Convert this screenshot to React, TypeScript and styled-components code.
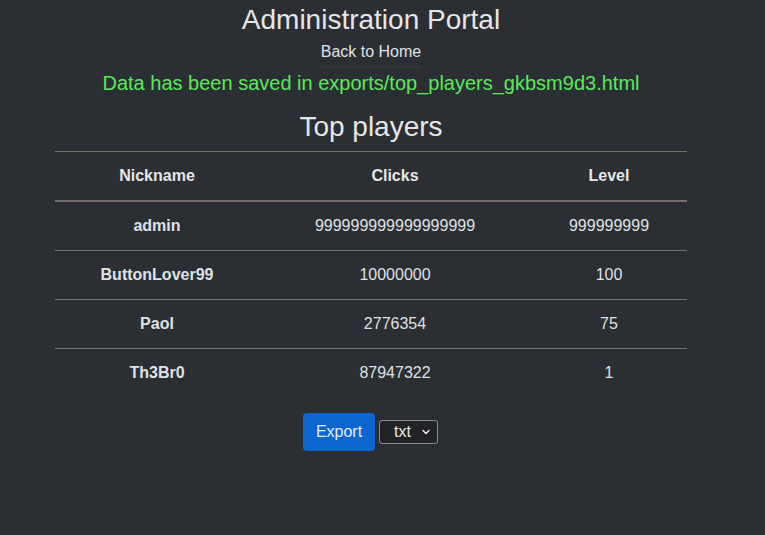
import React from "react";
import styled, { createGlobalStyle } from "styled-components";

const Global = createGlobalStyle`
  html, body { margin: 0; padding: 0; background: #2b2e32; }
  body { font-family: "Liberation Sans", Arial, sans-serif; color: #dee2e6; }
`;

const Page = styled.div`
  width: 742px;
  min-height: 535px;
  display: flex;
  flex-direction: column;
  align-items: center;
  padding-top: 4px;
  box-sizing: border-box;
`;

const Title = styled.h1`
  margin: 0;
  font-size: 28px;
  font-weight: 400;
  line-height: 32px;
  color: #e4e6e8;
`;

const HomeLink = styled.a`
  margin-top: 6px;
  font-size: 16px;
  line-height: 20px;
  color: #dee2e6;
  text-decoration: none;
  padding-bottom: 4px;
  border-bottom: 2px solid #33363a;
`;

const Notice = styled.p`
  margin: 3px 0 0;
  font-size: 20px;
  line-height: 24px;
  color: #5ae85a;
`;

const SubTitle = styled.h2`
  margin: 15px 0 0;
  font-size: 28px;
  font-weight: 400;
  line-height: 34px;
  color: #e4e6e8;
`;

const Table = styled.table`
  margin-top: 7px;
  width: 632px;
  border-collapse: collapse;
  font-size: 16px;
  border-top: 1px solid #77706a;
`;

const Th = styled.th`
  height: 48px;
  padding: 0 8px;
  font-weight: 700;
  text-align: center;
  border-bottom: 2px solid #77706a;
  color: #e4e6e8;
`;

const Row = styled.tr`
  &:last-child td { border-bottom: none; }
`;

const Td = styled.td<{ $bold?: boolean }>`
  height: 48px;
  padding: 0 8px;
  text-align: center;
  font-weight: ${(p) => (p.$bold ? 700 : 400)};
  border-bottom: 1px solid #77706a;
  color: #dee2e6;
`;

const Actions = styled.div`
  margin-top: 16px;
  margin-right: 1px;
  display: flex;
  align-items: center;
  gap: 4px;
`;

const ExportButton = styled.button`
  width: 72px;
  height: 38px;
  border: none;
  border-radius: 4px;
  background: #0b66d0;
  color: #e8eef8;
  font-family: "Liberation Sans", Arial, sans-serif;
  font-size: 16px;
  padding: 0;
`;

const SelectBox = styled.div`
  width: 59px;
  height: 24px;
  box-sizing: border-box;
  border: 1px solid #8a8d92;
  border-radius: 3px;
  background: #212327;
  display: flex;
  align-items: center;
  justify-content: space-between;
  padding: 0 6px 0 14px;
  font-size: 16px;
  color: #e8e8e8;
`;

const players = [
  { name: "admin", clicks: "999999999999999999", level: "999999999" },
  { name: "ButtonLover99", clicks: "10000000", level: "100" },
  { name: "Paol", clicks: "2776354", level: "75" },
  { name: "Th3Br0", clicks: "87947322", level: "1" },
];

export default function App() {
  return (
    <>
      <Global />
      <Page>
        <Title>Administration Portal</Title>
        <HomeLink href="#">Back to Home</HomeLink>
        <Notice>Data has been saved in exports/top_players_gkbsm9d3.html</Notice>
        <SubTitle>Top players</SubTitle>
        <Table>
          <colgroup>
            <col style={{ width: "204px" }} />
            <col style={{ width: "272px" }} />
            <col style={{ width: "156px" }} />
          </colgroup>
          <thead>
            <tr>
              <Th>Nickname</Th>
              <Th>Clicks</Th>
              <Th>Level</Th>
            </tr>
          </thead>
          <tbody>
            {players.map((p) => (
              <Row key={p.name}>
                <Td $bold>{p.name}</Td>
                <Td>{p.clicks}</Td>
                <Td>{p.level}</Td>
              </Row>
            ))}
          </tbody>
        </Table>
        <Actions>
          <ExportButton>Export</ExportButton>
          <SelectBox>
            <span>txt</span>
            <svg width="10" height="10" viewBox="0 0 10 10">
              <path d="M2 3.5 L5 6.5 L8 3.5" stroke="#e8e8e8" strokeWidth="1.5" fill="none" strokeLinecap="round" strokeLinejoin="round" />
            </svg>
          </SelectBox>
        </Actions>
      </Page>
    </>
  );
}
